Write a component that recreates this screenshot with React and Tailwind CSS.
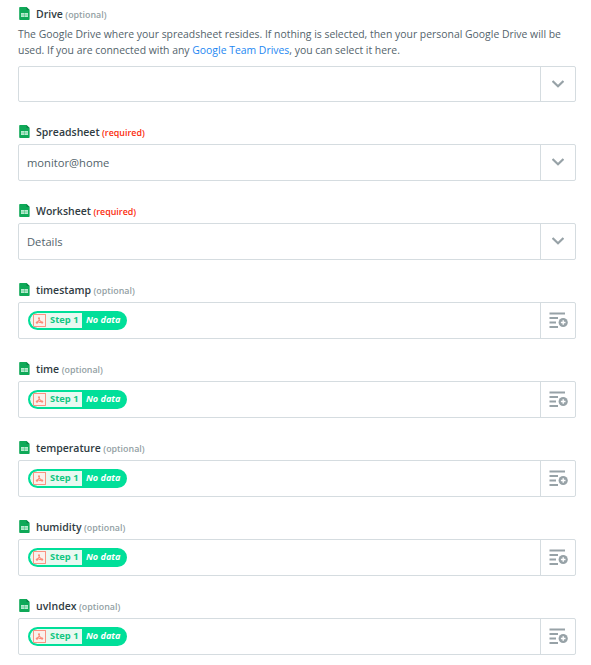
const textFields = ['timestamp', 'time', 'temperature', 'humidity', 'uvIndex'];

function SheetIcon() {
  return (
    <svg className="mb-px h-[13px] w-[11px] shrink-0" viewBox="0 0 11 13">
      <path d="M1 0h6.5L10.6 3v9.2a.8.8 0 0 1-.8.8H1a.8.8 0 0 1-.8-.8V.8A.8.8 0 0 1 1 0z" fill="#0fa958" />
      <path d="M7.5 0l3.1 3H8.1a.6.6 0 0 1-.6-.6z" fill="#0a8447" />
      <rect x="2" y="6" width="7" height="4" fill="#b9ebd0" />
      <path d="M2.4 8h6.2M5.5 6.2v3.6" stroke="#35b873" strokeWidth=".5" />
    </svg>
  );
}

function Label({ name, required }) {
  return (
    <div className="flex h-5 items-center pl-px">
      <SheetIcon />
      <span className="ml-[6px] mt-px text-[10.5px] font-semibold text-[#2f3b42]">{name}</span>
      {required ? (
        <span className="ml-[2.5px] mt-0.5 text-[8.9px] font-semibold text-[#fb2b0c]">(required)</span>
      ) : (
        <span className="ml-[2.5px] mt-0.5 text-[8.9px] font-semibold text-[#939fa4]">(optional)</span>
      )}
    </div>
  );
}

function Chevron() {
  return (
    <svg className="mb-px h-2 w-3" viewBox="0 0 12 8">
      <path d="M.6 1l5.4 5.2L11.4 1" fill="none" stroke="#97a2a7" strokeWidth="2.1" />
    </svg>
  );
}

function InsertIcon() {
  return (
    <svg className="h-[17px] w-5" viewBox="0 0 20 17">
      <path d="M1.5 1.5H17M1.5 6H10M1.5 10.5H8M1.5 15H10" stroke="#97a2a7" strokeWidth="2" />
      <circle cx="15.2" cy="10.5" r="4.6" fill="#97a2a7" />
      <path d="M15.2 8.2v4.6M12.9 10.5h4.6" stroke="#fff" strokeWidth="1.4" />
    </svg>
  );
}

function Box({ children, icon, className = 'h-[37px]' }) {
  return (
    <div className={`flex w-[558px] rounded-[2px] border border-[#d5dce0] ${className}`}>
      <div className="flex flex-1 items-center pl-2 text-[11.2px] text-[#53636b]">{children}</div>
      <div className="flex w-[35px] items-center justify-center border-l border-[#d5dce0]">{icon}</div>
    </div>
  );
}

function StepPill() {
  return (
    <div className="ml-px flex h-[19px] w-[99px] items-center overflow-hidden rounded-full border-2 border-[#00df99] bg-[#00df99] font-bold">
      <div className="flex h-[15px] w-[52px] shrink-0 items-center rounded-l-full bg-[#e8f9f1] pl-[3px]">
        <svg className="h-[13px] w-[13px] shrink-0" viewBox="0 0 13 13" fill="none" stroke="#fb8b78">
          <rect x=".5" y=".5" width="12" height="12" fill="#faf1ec" strokeWidth=".9" />
          <path d="M6 4.2l.3 2L4 8.5M6.2 6.2l2.8 2.2M5.5 8.2l3.5.4" strokeWidth="1.1" />
          <circle cx="6" cy="4.2" r="1" fill="#fb8b78" stroke="none" />
          <circle cx="4" cy="8.6" r="1.2" fill="#fb8b78" stroke="none" />
          <circle cx="9.2" cy="8.6" r="1.1" fill="#fb8b78" stroke="none" />
        </svg>
        <span className="mb-0.5 ml-1 whitespace-nowrap text-[9.4px] leading-[14px] text-[#12c782]">Step 1</span>
      </div>
      <span className="mb-0.5 ml-1 whitespace-nowrap text-[9.1px] leading-[14px] italic text-white">No data</span>
    </div>
  );
}

export default function App() {
  return (
    <main className="flex h-[665px] w-[591px] flex-col gap-5 overflow-hidden bg-white pl-[18px] pt-1 font-['Open_Sans',sans-serif]">
      <section>
        <Label name="Drive" />
        <p className="mb-2 mt-0.5 whitespace-nowrap text-[10.42px] leading-4 text-[#53636b]">
          The Google Drive where your spreadsheet resides. If nothing is selected, then your personal Google Drive will be
          <br />
          used. If you are connected with any <a className="text-[#1d87f2]">Google Team Drives</a>, you can select it here.
        </p>
        <Box icon={<Chevron />} className="h-9" />
      </section>
      <section className="flex flex-col gap-0.5">
        <Label name="Spreadsheet" required />
        <Box icon={<Chevron />}>
          <span className="mt-0.5">monitor@home</span>
        </Box>
      </section>
      <section className="flex flex-col gap-0.5">
        <Label name="Worksheet" required />
        <Box icon={<Chevron />}>
          <span className="mt-0.5">Details</span>
        </Box>
      </section>
      {textFields.map((name) => (
        <section key={name} className="flex flex-col gap-0.5">
          <Label name={name} />
          <Box icon={<InsertIcon />}>
            <StepPill />
          </Box>
        </section>
      ))}
    </main>
  );
}
